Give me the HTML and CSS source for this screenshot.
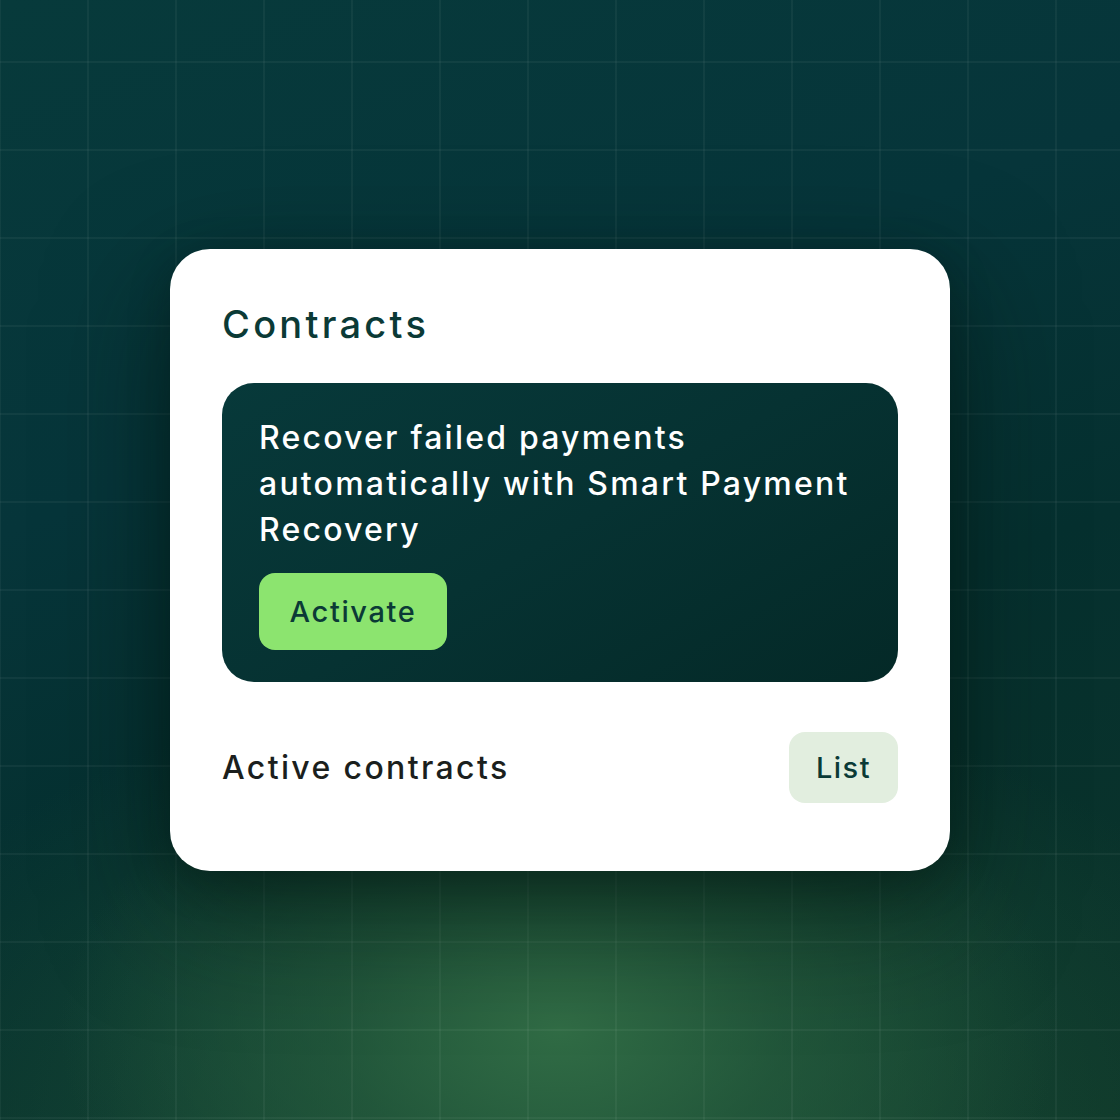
FILE: index.html
```html
<!DOCTYPE html>
<html lang="en">
<head>
<meta charset="utf-8">
<title>Contracts</title>
<link rel="stylesheet" href="styles.css">
</head>
<body>
<div class="stage">
  <section class="card">
    <h1 class="title">Contracts</h1>
    <div class="promo">
      <p class="promo-text">Recover failed payments automatically with Smart Payment Recovery</p>
      <button class="btn-activate">Activate</button>
    </div>
    <div class="row">
      <span class="row-label">Active contracts</span>
      <button class="btn-list">List</button>
    </div>
  </section>
</div>
</body>
</html>
```

FILE: styles.css
```css
* { box-sizing: border-box; }
html, body { margin: 0; padding: 0; }
body {
  width: 1120px;
  height: 1120px;
  overflow: hidden;
  font-family: "Inter", "Noto Sans", sans-serif;
}
.stage {
  width: 1120px;
  height: 1120px;
  display: flex;
  justify-content: center;
  align-items: flex-start;
  padding-top: 249px;
  background:
    linear-gradient(to right, rgba(255,255,255,0.045) 2px, transparent 2px) 87px 0 / 88px 88px,
    linear-gradient(to bottom, rgba(255,255,255,0.045) 2px, transparent 2px) 0 61px / 88px 88px,
    radial-gradient(ellipse 500px 320px at 560px 1030px, rgba(50,110,70,0.95) 0%, rgba(40,95,62,0.6) 45%, rgba(30,80,55,0) 100%),
    radial-gradient(ellipse 760px 440px at 560px 1120px, rgba(35,90,60,0.75) 0%, rgba(20,60,45,0) 100%),
    linear-gradient(160deg, #073a3b 0%, #06353a 35%, #05302f 60%, #0c3428 100%);
}
.card {
  width: 780px;
  background: #ffffff;
  border-radius: 40px;
  padding: 53px 52px 68px 52px;
  box-shadow: 0 40px 120px rgba(0, 20, 15, 0.55), 0 10px 40px rgba(0, 20, 15, 0.3);
}
.title {
  margin: 0;
  font-size: 38px;
  line-height: 44px;
  font-weight: 500;
  color: #0b3a36;
  letter-spacing: 0.086em;
}
.promo {
  margin-top: 37px;
  border-radius: 32px;
  padding: 32px 24px 32px 37px;
  background: linear-gradient(150deg, #07393a 0%, #063232 50%, #042927 100%);
}
.promo-text {
  margin: 0;
  color: #ffffff;
  font-size: 32px;
  line-height: 46px;
  font-weight: 500;
  letter-spacing: 0.069em;
}
.btn-activate {
  margin-top: 20px;
  display: block;
  width: 188px;
  height: 77px;
  border: none;
  border-radius: 16px;
  background: #8ce46f;
  color: #0b3a36;
  font-family: inherit;
  font-size: 29px;
  font-weight: 500;
  letter-spacing: 0.056em;
  padding: 0;
}
.row {
  margin-top: 50px;
  display: flex;
  align-items: center;
  justify-content: space-between;
}
.row-label {
  font-size: 32px;
  font-weight: 500;
  color: #1b1f1d;
  letter-spacing: 0.074em;
}
.btn-list {
  width: 109px;
  height: 71px;
  border: none;
  border-radius: 16px;
  background: #e2eedf;
  color: #0b3a36;
  font-family: inherit;
  font-size: 29px;
  font-weight: 500;
  letter-spacing: 0.05em;
  padding: 0;
}
```
